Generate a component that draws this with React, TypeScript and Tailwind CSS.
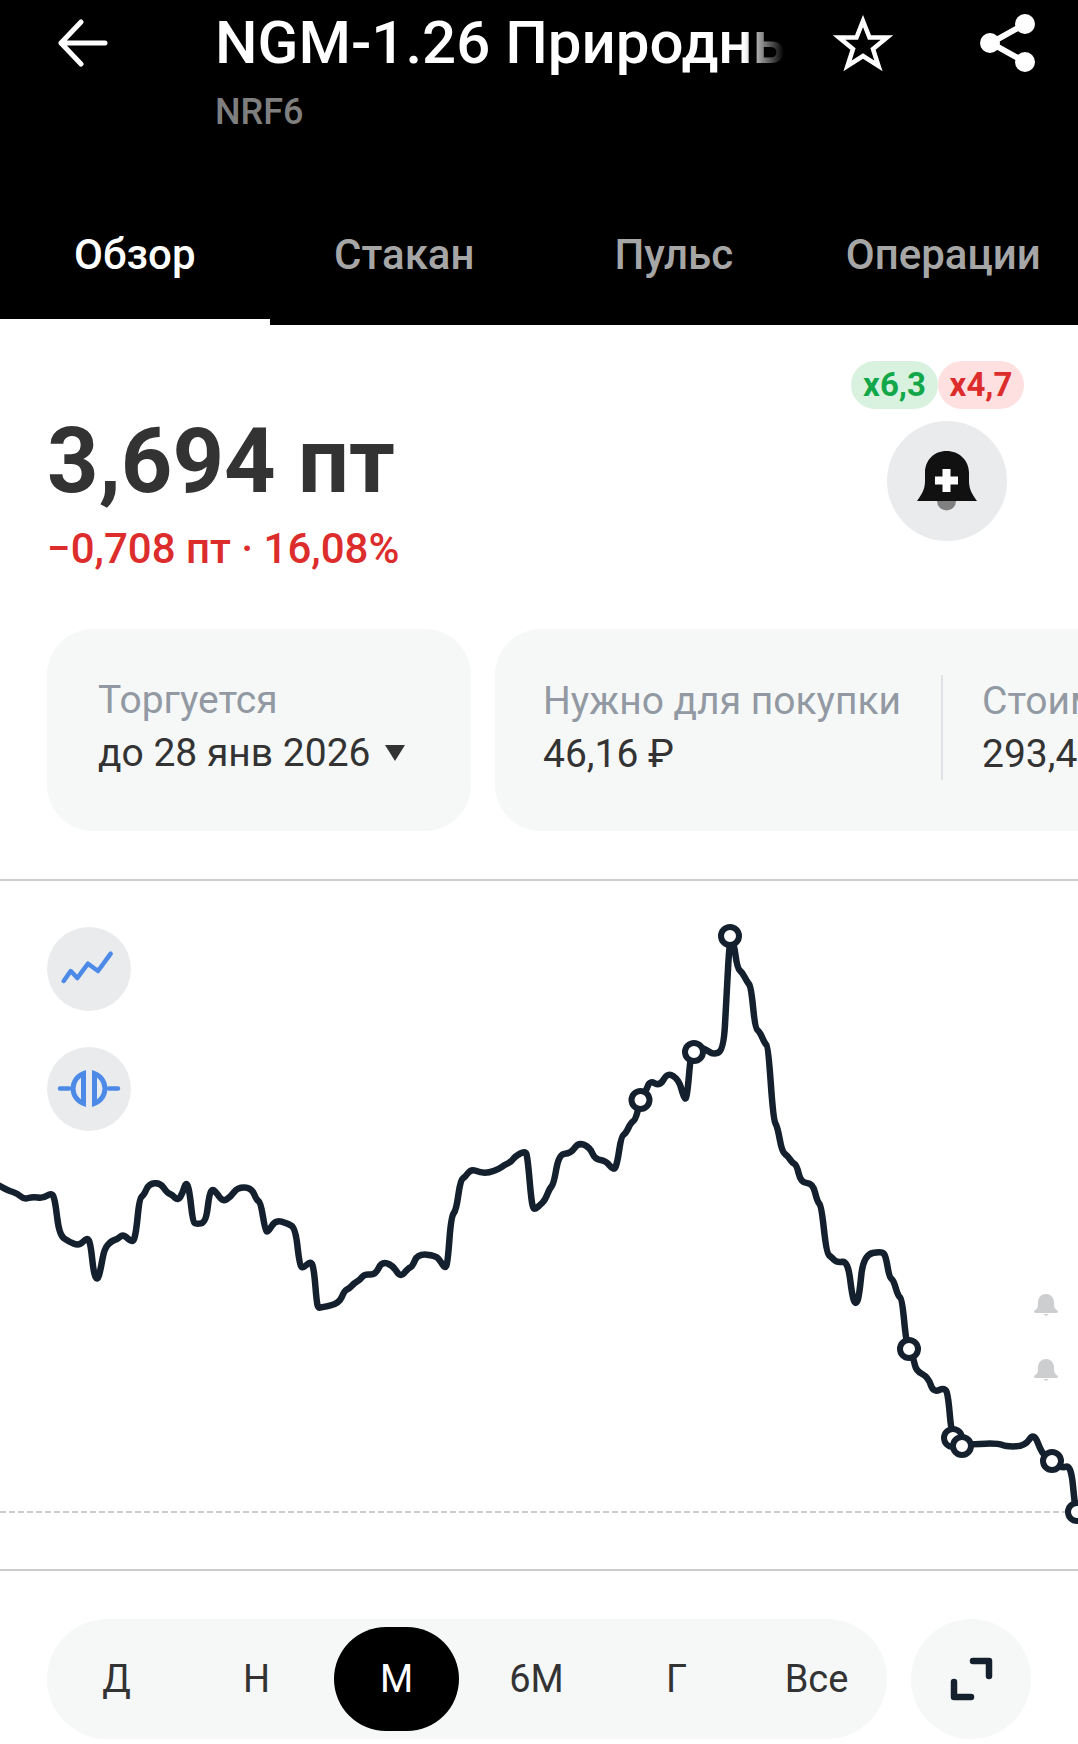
import React from "react";

const part1 = [[0,858],[25,872],[50,880],[70,898],[95,890],[125,895],[150,878],[160,900],[172,1005],[200,1025],[230,1038],[253,1012],[263,1030],[272,1120],[283,1142],[292,1110],[303,1045],[325,1022],[340,1018],[358,1002],[385,1030],[395,1000],[405,895],[418,885],[432,852],[465,848],[485,878],[500,885],[517,902],[530,880],[540,845],[550,870],[560,965],[570,973],[598,967],[608,880],[618,867],[630,880],[647,905],[670,890],[690,862],[730,863],[745,900],[757,908],[770,990],[778,997],[800,960],[835,970],[858,985],[870,1095],[880,1105],[903,1082],[912,1110],[920,1210],[925,1224],[935,1222],[985,1210],[1000,1172],[1015,1165],[1030,1148],[1045,1140],[1058,1122],[1090,1125],[1108,1085],[1140,1095],[1163,1133],[1185,1105],[1197,1100],[1213,1062],[1265,1066],[1280,1085],[1292,1105],[1300,1090],[1310,950],[1325,930],[1337,840],[1350,832],[1368,807],[1395,818],[1420,818],[1450,806],[1465,795],[1485,785],[1495,770],[1525,752],[1532,770],[1545,925],[1555,927]].map(([x, y]) => [x / 2.904, 900 + y / 3]);

const part2 = [[0,915],[15,900],[28,865],[40,852],[55,762],[90,760],[112,727],[145,742],[160,778],[192,782],[215,812],[225,790],[237,708],[250,700],[265,668],[278,660],[293,600],[310,570],[320,542],[350,558],[372,517],[405,540],[418,590],[428,600],[440,455],[450,440],[480,445],[505,465],[535,450],[543,300],[553,108],[565,130],[575,205],[590,218],[603,245],[615,260],[627,385],[640,395],[655,430],[665,440],[680,660],[692,680],[705,755],[722,768],[735,788],[748,795],[760,848],[795,850],[808,905],[820,918],[835,1060],[850,1072],[865,1088],[897,1083],[910,1190],[920,1215],[930,1190],[942,1065],[997,1053],[1008,1070],[1018,1132],[1030,1140],[1043,1187],[1055,1197]].map(([x, y]) => [540 + x / 2.914, 900 + y / 3]);

const part3 = [[378,300],[387,327],[402,360],[408,392],[445,412],[460,458],[495,442],[505,470],[515,590],[545,615],[580,612],[655,610],[680,620],[735,618],[762,577],[785,640],[815,663],[845,685],[873,675],[885,800],[890,815]].map(([x, y]) => [780 + x / 3, 1240 + y / 3]);

const points = [...part1, ...part2, ...part3];

// rounds the corners the same way the chart line does
function smoothPath(pts: number[][]) {
  let d = `M${pts[0][0]} ${pts[0][1]}`;
  for (let i = 1; i < pts.length - 1; i++) {
    const mx = (pts[i][0] + pts[i + 1][0]) / 2;
    const my = (pts[i][1] + pts[i + 1][1]) / 2;
    d += ` Q${pts[i][0]} ${pts[i][1]} ${mx} ${my}`;
  }
  const last = pts[pts.length - 1];
  return d + ` L${last[0]} ${last[1]}`;
}

const nodes = [[640.5,1100],[694,1052],[730,936],[909,1349],[953,1438],[962,1446],[1052,1461],[1077,1512]];
const ranges = ["Д", "Н", "М", "6М", "Г", "Все"];
const tabs = ["Обзор", "Стакан", "Пульс", "Операции"];

function SmallBell() {
  return (
    <svg width="24" height="22" viewBox="0 0 24 22" fill="#ccced0">
      <path d="M0 17.5C0 16 3.5 16 3.8 12L4 8C4.3 3 7.5 0 12 0S19.700 3 20 8L20.200 12C20.500 16 24 16 24 17.500C24 18.500 23 19 22 19H2C1 19 0 18.500 0 17.500Z" />
      <path d="M9 20H15L12 22Z" />
    </svg>
  );
}

export default function App() {
  return (
    <div className="w-[1078px] h-[1744px] overflow-hidden bg-white font-['Roboto',sans-serif]">
      <div className="bg-black h-[325px] flex flex-col justify-between">
        <div className="flex items-start">
          <svg className="ml-[58px] mt-[19px] shrink-0" width="50" height="48" viewBox="0 0 50 48" fill="none" stroke="#fff" strokeWidth="5" strokeLinecap="round" strokeLinejoin="round">
            <path d="M23 3L3 24L23 45M3 24H47" />
          </svg>
          <div className="ml-[107px] w-[569px] relative overflow-hidden shrink-0">
            <div className="text-white text-[60px] leading-[68px] font-medium whitespace-nowrap mt-[9px]">NGM-1.26 Природный газ</div>
            <div className="absolute right-0 top-0 bottom-0 w-[40px] bg-gradient-to-r from-transparent to-black"></div>
            <div className="text-[#7f7f7f] text-[36px] leading-[42px] font-medium mt-[14px]">NRF6</div>
          </div>
          <svg className="ml-[49px] mt-[15px] shrink-0" width="60" height="57" viewBox="0 0 60 57" fill="none" stroke="#fff" strokeWidth="4.500" strokeLinejoin="miter">
            <path d="M30 6L36.500 22.500H54L40 34L45.500 51L30 41L14.500 51L20 34L6 22.500H23.500Z" />
          </svg>
          <svg className="ml-[87px] mt-[13px] shrink-0" width="56" height="60" viewBox="0 0 56 60" fill="#fff" stroke="#fff" strokeWidth="6">
            <path d="M45 11L11 30L45 49" fill="none" />
            <circle cx="45" cy="11" r="7" />
            <circle cx="10" cy="30" r="7" />
            <circle cx="45" cy="49" r="7" />
          </svg>
        </div>
        <div className="grid grid-cols-4 h-[95px]">
          {tabs.map((tab, index) => (
            <div key={tab} className={index === 0 ? "text-white text-[42px] font-medium text-center border-b-[6px] border-white leading-[50px]" : "text-[#a6a6a6] text-[42px] font-medium text-center leading-[50px]"}>
              {tab}
            </div>
          ))}
        </div>
      </div>

      <div className="h-[304px] flex justify-between relative">
        <div className="pl-[47px] pt-[92px]">
          <div className="text-[#333333] text-[90px] leading-[90px] font-bold">3,694 пт</div>
          <div className="text-[#dd2c2c] text-[42px] leading-[48px] font-medium mt-[18px]">−0,708 пт · 16,08%</div>
        </div>
        <div className="w-[173px] mr-[54px] pt-[36px] flex flex-col items-center">
          <div className="flex">
            <div className="h-[48px] w-[87px] rounded-[24px] bg-[#d9f2e0] text-[#12a84a] text-[33px] leading-[48px] font-bold text-center">x6,3</div>
            <div className="h-[48px] w-[86px] rounded-[24px] bg-[#ffe0e0] text-[#dd2c2c] text-[33px] leading-[48px] font-bold text-center">x4,7</div>
          </div>
          <div className="w-[120px] h-[120px] rounded-full bg-[#e9ebed] mt-[12px] ml-[19px] flex items-center justify-center">
            <svg width="60" height="60" viewBox="0 0 60 60">
              <circle cx="29.500" cy="50" r="9.500" fill="#808080" />
              <path d="M0 50C5 43 8 38 8 30V22C8 9 17 0 29.500 0S52 9 52 22V30C52 38 55 43 60 50Z" fill="#111111" />
              <path d="M25.500 18H33.500V25.500H41V33.500H33.500V41H25.500V33.500H18V25.500H25.500Z" fill="#ffffff" />
            </svg>
          </div>
        </div>
      </div>

      <div className="flex gap-[24px] pl-[47px] overflow-hidden h-[202px]">
        <div className="w-[424px] h-[202px] shrink-0 rounded-[46px] bg-[#f6f8f8] pl-[51px] pt-[47px]">
          <div className="text-[#9299a2] text-[39px] leading-[48px]">Торгуется</div>
          <div className="flex items-center text-[#333333] text-[39px] leading-[48px] mt-[5px]">
            до 28 янв 2026
            <svg className="ml-[14px]" width="20" height="16" viewBox="0 0 20 16" fill="#333333">
              <path d="M0 0H20L10 16Z" />
            </svg>
          </div>
        </div>
        <div className="w-[800px] h-[202px] shrink-0 rounded-[46px] bg-[#f6f8f8] pl-[48px] pb-[6px] flex items-center">
          <div className="w-[398px] shrink-0">
            <div className="text-[#9299a2] text-[39px] leading-[48px] whitespace-nowrap">Нужно для покупки</div>
            <div className="text-[#333333] text-[39px] leading-[48px] mt-[5px]">46,16 ₽</div>
          </div>
          <div className="w-[2px] h-[105px] bg-[#dfe2e4] shrink-0"></div>
          <div className="pl-[39px]">
            <div className="text-[#9299a2] text-[39px] leading-[48px]">Стоимость</div>
            <div className="text-[#333333] text-[39px] leading-[48px] mt-[5px]">293,45 ₽</div>
          </div>
        </div>
      </div>

      <div className="relative h-[692px] mt-[48px] border-y-2 border-[#cccccc]">
        <svg className="block" width="1078" height="688" viewBox="0 881 1078 688">
          <line x1="0" y1="1512" x2="1078" y2="1512" stroke="#cccccc" strokeWidth="2" strokeDasharray="6 3" />
          <path d={smoothPath(points)} fill="none" stroke="#14202e" strokeWidth="6.500" strokeLinecap="round" strokeLinejoin="round" />
          {nodes.map(([cx, cy]) => (
            <circle key={cx} cx={cx} cy={cy} r="9" fill="#ffffff" stroke="#14202e" strokeWidth="6" />
          ))}
        </svg>

        <div className="absolute left-[47px] top-[46px] w-[84px] h-[84px] rounded-full bg-[#e9ebed]">
          <svg width="84" height="84" viewBox="0 0 84 84" fill="none" stroke="#4d8ae8" strokeWidth="4.500" strokeLinecap="round" strokeLinejoin="round">
            <path d="M16.700 54L23.700 44L30.300 51L41 36.700L51 44L63.700 26.700" />
          </svg>
        </div>
        <div className="absolute left-[47px] top-[166px] w-[84px] h-[84px] rounded-full bg-[#e9ebed]">
          <svg width="84" height="84" viewBox="0 0 84 84" fill="none" stroke="#4d8ae8" strokeWidth="5">
            <path d="M36.500 26.500A16 16 0 0 0 36.500 56.500Z" />
            <path d="M47.500 26.500A16 16 0 0 1 47.500 56.500Z" />
            <path d="M13 41.500H22M62 41.500H71" strokeLinecap="round" strokeWidth="4.500" />
          </svg>
        </div>
        <div className="absolute left-[1034px] top-[413px]"><SmallBell /></div>
        <div className="absolute left-[1034px] top-[478px]"><SmallBell /></div>
      </div>

      <div className="flex pl-[47px] gap-[24px] mt-[48px]">
        <div className="w-[840px] h-[120px] rounded-[60px] bg-[#f6f8f8] pl-[7px] flex items-center gap-[15px]">
          {ranges.map((range) => (
            <div key={range} className={range === "М" ? "w-[125px] h-[104px] rounded-[52px] bg-black text-white text-[38px] flex items-center justify-center" : "w-[125px] h-[104px] text-[#333333] text-[38px] flex items-center justify-center"}>
              {range}
            </div>
          ))}
        </div>
        <div className="w-[120px] h-[120px] rounded-full bg-[#f6f8f8]">
          <svg width="120" height="120" viewBox="0 0 120 120" fill="none" stroke="#14202e" strokeWidth="6.500" strokeLinecap="round" strokeLinejoin="round">
            <path d="M62 42H78V57M43 63V78H60" />
          </svg>
        </div>
      </div>
    </div>
  );
}
